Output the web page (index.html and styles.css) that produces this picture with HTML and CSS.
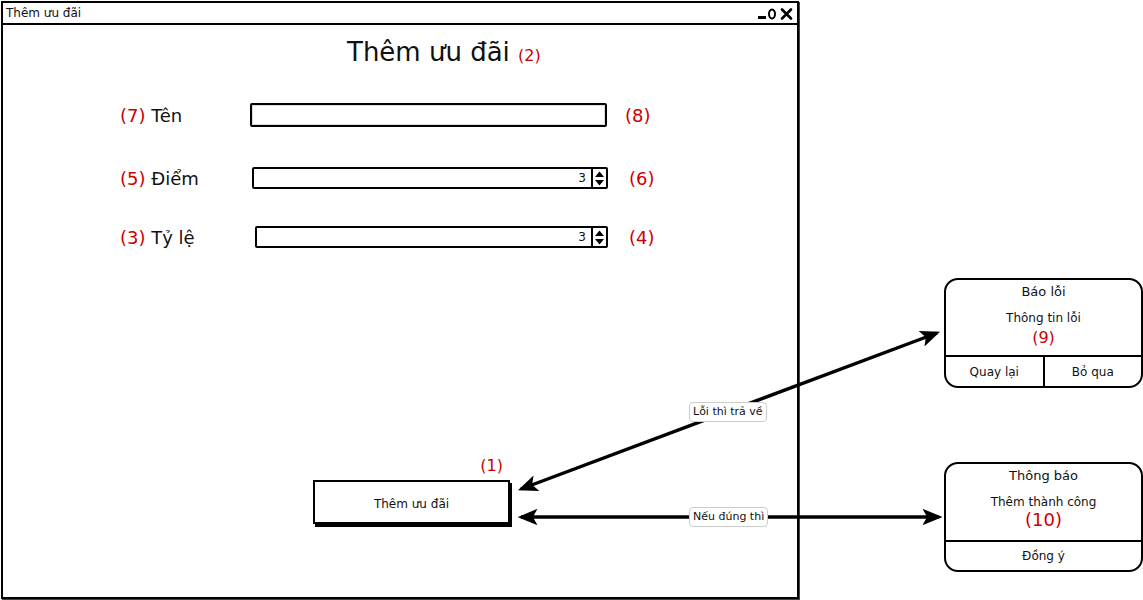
FILE: index.html
```html
<!DOCTYPE html>
<html lang="vi">
<head>
  <meta charset="UTF-8">
  <meta name="viewport" content="width=device-width, initial-scale=1">
  <title>Thêm ưu đãi</title>
  <link rel="stylesheet" href="styles.css">
</head>
<body>
  <div class="canvas">
    <!-- cửa sổ chính -->
    <div class="window">
      <div class="titlebar">
        <span>Thêm ưu đãi</span>
        <svg class="win-ctrl" width="40" height="14" viewBox="0 0 40 14">
          <rect x="3" y="9" width="8" height="3" fill="#000"/>
          <ellipse cx="17" cy="7" rx="3" ry="4.6" fill="none" stroke="#000" stroke-width="2"/>
          <path d="M27 2.5 L36 11.5 M36 2.5 L27 11.5" stroke="#000" stroke-width="2.6" stroke-linecap="round"/>
        </svg>
      </div>
      <div class="window-body">
        <div class="page-title">Thêm ưu đãi <span class="tag tag-title">(2)</span></div>

        <div class="form">
          <div class="form-row row-name">
            <div class="label"><span class="tag">(7)</span> Tên</div>
            <div class="textbox"></div>
            <span class="tag side-tag">(8)</span>
          </div>
          <div class="form-row row-point">
            <div class="label"><span class="tag">(5)</span> Điểm</div>
            <div class="spinner">
              <span class="spin-value">3</span>
              <span class="spin-btn">
                <svg width="11" height="17" viewBox="0 0 11 17"><path d="M1 7 L5.5 1.5 L10 7 Z M1 10 L5.5 15.5 L10 10 Z" fill="#000"/></svg>
              </span>
            </div>
            <span class="tag side-tag">(6)</span>
          </div>
          <div class="form-row row-rate">
            <div class="label"><span class="tag">(3)</span> Tỷ lệ</div>
            <div class="spinner">
              <span class="spin-value">3</span>
              <span class="spin-btn">
                <svg width="11" height="17" viewBox="0 0 11 17"><path d="M1 7 L5.5 1.5 L10 7 Z M1 10 L5.5 15.5 L10 10 Z" fill="#000"/></svg>
              </span>
            </div>
            <span class="tag side-tag">(4)</span>
          </div>
        </div>

        <div class="submit">
          <div class="tag submit-tag">(1)</div>
          <div class="btn">Thêm ưu đãi</div>
        </div>
      </div>
    </div>

    <!-- mũi tên -->
    <svg class="links" width="1143" height="600" viewBox="0 0 1143 600">
      <defs>
        <marker id="head" markerWidth="6" markerHeight="5" refX="5" refY="2.5" orient="auto-start-reverse" markerUnits="strokeWidth">
          <path d="M0 0 L6 2.5 L0 5 L1.4 2.5 Z" fill="#000"/>
        </marker>
      </defs>
      <line x1="521" y1="489" x2="937" y2="333" stroke="#000" stroke-width="3.3" marker-start="url(#head)" marker-end="url(#head)"/>
      <line x1="521" y1="517" x2="939" y2="517" stroke="#000" stroke-width="3.3" marker-start="url(#head)" marker-end="url(#head)"/>
    </svg>
    <div class="link-label label-error">Lỗi thì trả về</div>
    <div class="link-label label-ok">Nếu đúng thì</div>

    <!-- hộp thoại lỗi -->
    <div class="dialog dialog-error">
      <div class="dlg-body">
        <div class="dlg-title">Báo lỗi</div>
        <div class="dlg-msg">Thông tin lỗi</div>
        <div class="tag dlg-tag">(9)</div>
      </div>
      <div class="dlg-actions">
        <div class="dlg-btn">Quay lại</div>
        <div class="dlg-btn">Bỏ qua</div>
      </div>
    </div>

    <!-- hộp thoại thành công -->
    <div class="dialog dialog-ok">
      <div class="dlg-body">
        <div class="dlg-title">Thông báo</div>
        <div class="dlg-msg">Thêm thành công</div>
        <div class="tag dlg-tag tag-big">(10)</div>
      </div>
      <div class="dlg-actions">
        <div class="dlg-btn">Đồng ý</div>
      </div>
    </div>
  </div>
</body>
</html>
```

FILE: styles.css
```css
/* chung */
* {
  box-sizing: border-box;
  margin: 0;
  padding: 0;
}
body {
  font-family: 'DejaVu Sans', 'Liberation Sans', sans-serif;
  color: #111;
  background: #fff;
}
.canvas {
  position: relative;
  width: 1143px;
  height: 600px;
  overflow: hidden;
}
.tag {
  color: #cc0000;
}

/* cửa sổ */
.window {
  position: absolute;
  left: 1px;
  top: 1px;
  width: 798px;
  height: 598px;
  border: 2px solid #000;
  box-shadow: 1px 1px 0 #444;
}
.titlebar {
  height: 22px;
  border-bottom: 2px solid #000;
  display: flex;
  align-items: center;
  justify-content: space-between;
  padding: 0 2px 0 3px;
  font-size: 12px;
}
.win-ctrl {
  margin-top: 1px;
}
.window-body {
  padding-top: 12px;
}
.page-title {
  padding-left: 344px;
  font-size: 26px;
  line-height: 30px;
}
.tag-title {
  font-size: 16px;
}

/* form */
.form {
  margin-top: 32px;
  padding-left: 117px;
}
.form-row {
  display: grid;
  grid-template-columns: 130px 358px auto;
  align-items: center;
  font-size: 18px;
}
.row-name {
  height: 24px;
}
.row-point {
  height: 22px;
  margin-top: 40px;
}
.row-rate {
  height: 22px;
  margin-top: 37px;
}
.textbox {
  height: 24px;
  margin-right: 1px;
  border: 2px solid #000;
  border-radius: 2px;
  box-shadow: inset 0 0 0 1px #ddd;
}
.side-tag {
  margin-left: 17px;
}
.row-point .side-tag,
.row-rate .side-tag {
  margin-left: 21px;
}
.spinner {
  height: 22px;
  display: flex;
  justify-content: flex-end;
  align-items: stretch;
  border: 2px solid #000;
  border-radius: 2px;
  font-size: 12px;
}
.row-point .spinner {
  margin-left: 2px;
}
.row-rate .spinner {
  margin-left: 5px;
}
.spin-value {
  display: flex;
  align-items: center;
  padding-right: 5px;
}
.spin-btn {
  width: 15px;
  border-left: 2px solid #000;
  display: flex;
  align-items: center;
  justify-content: center;
}

/* nút */
.submit {
  margin-top: 208px;
  margin-left: 310px;
  width: 197px;
}
.submit-tag {
  text-align: right;
  padding-right: 7px;
  font-size: 16px;
  line-height: 20px;
  margin-bottom: 4px;
}
.btn {
  height: 44px;
  border: 2px solid #000;
  box-shadow: 2px 3px 0 #000;
  display: flex;
  align-items: center;
  justify-content: center;
  font-size: 12px;
  padding-top: 3px;
}

/* mũi tên */
.links {
  position: absolute;
  left: 0;
  top: 0;
  pointer-events: none;
}
.link-label {
  position: absolute;
  padding: 1px 3px;
  background: #fff;
  border: 1px solid #ccc;
  border-radius: 4px;
  font-size: 11px;
  line-height: 16px;
  white-space: nowrap;
}
.label-error {
  left: 689px;
  top: 402px;
}
.label-ok {
  left: 689px;
  top: 507px;
}

/* hộp thoại */
.dialog {
  position: absolute;
  left: 944px;
  width: 199px;
  height: 110px;
  border: 2px solid #000;
  border-radius: 14px;
  display: flex;
  flex-direction: column;
  text-align: center;
}
.dialog-error {
  top: 278px;
}
.dialog-ok {
  top: 462px;
}
.dlg-body {
  height: 75px;
}
.dialog-ok .dlg-body {
  height: 76px;
}
.dlg-title {
  margin-top: 4px;
  font-size: 13px;
  line-height: 16px;
}
.dlg-msg {
  margin-top: 10px;
  font-size: 12px;
  line-height: 16px;
}
.dlg-tag {
  margin-top: 2px;
  font-size: 16px;
  line-height: 20px;
}
.tag-big {
  margin-top: 0;
  font-size: 18px;
}
.dlg-actions {
  flex: 1;
  display: flex;
  border-top: 2px solid #000;
  font-size: 12px;
}
.dlg-btn {
  flex: 1;
  display: flex;
  align-items: center;
  justify-content: center;
}
.dlg-btn + .dlg-btn {
  border-left: 2px solid #000;
}
```
